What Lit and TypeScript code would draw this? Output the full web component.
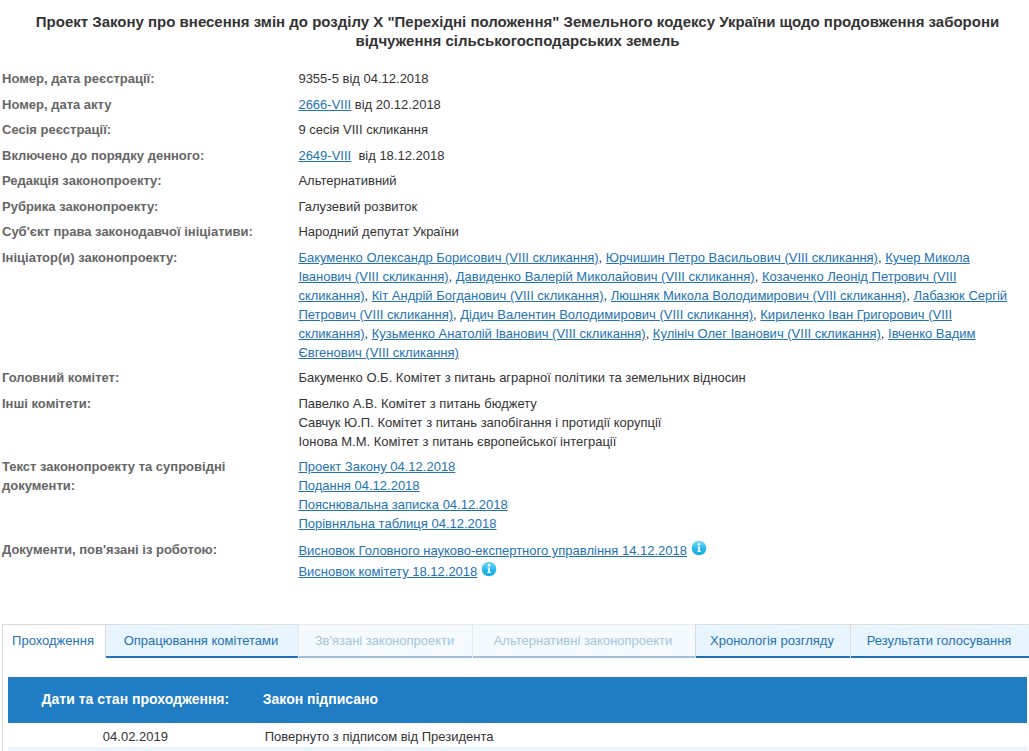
import { LitElement, html, css, nothing } from "lit";
import { customElement } from "lit/decorators.js";

const initiators = [
  "Бакуменко Олександр Борисович",
  "Юрчишин Петро Васильович",
  "Кучер Микола Іванович",
  "Давиденко Валерій Миколайович",
  "Козаченко Леонід Петрович",
  "Кіт Андрій Богданович",
  "Люшняк Микола Володимирович",
  "Лабазюк Сергій Петрович",
  "Дідич Валентин Володимирович",
  "Кириленко Іван Григорович",
  "Кузьменко Анатолій Іванович",
  "Кулініч Олег Іванович",
  "Івченко Вадим Євгенович",
];

const committees = [
  "Павелко А.В. Комітет з питань бюджету",
  "Савчук Ю.П. Комітет з питань запобігання і протидії корупції",
  "Іонова М.М. Комітет з питань європейської інтеграції",
];

const texts = [
  "Проект Закону 04.12.2018",
  "Подання 04.12.2018",
  "Пояснювальна записка 04.12.2018",
  "Порівняльна таблиця 04.12.2018",
];

const related = [
  "Висновок Головного науково-експертного управління 14.12.2018",
  "Висновок комітету 18.12.2018",
];

const tabs = [
  { label: "Проходження", state: "active" },
  { label: "Опрацювання комітетами", state: "open" },
  { label: "Зв'язані законопроекти", state: "disabled" },
  { label: "Альтернативні законопроекти", state: "disabled" },
  { label: "Хронологія розгляду", state: "open" },
  { label: "Результати голосування", state: "open" },
];

const infoIcon = html`<svg class="info" viewBox="0 0 16 16" role="img" aria-label="Інформація">
  <defs>
    <linearGradient id="info-fill" x1="0" y1="0" x2="0" y2="1">
      <stop offset="0" stop-color="#7ad8f6" />
      <stop offset="0.55" stop-color="#27b9ea" />
      <stop offset="1" stop-color="#14a9e0" />
    </linearGradient>
  </defs>
  <circle cx="8" cy="8" r="7.3" fill="url(#info-fill)" />
  <circle cx="8" cy="4.3" r="1.2" fill="#fff" />
  <path d="M6.4 6.4H9V11H9.8V12H6.4V11H7.2V7.4H6.4Z" fill="#fff" />
</svg>`;

@customElement("app-root")
export class AppRoot extends LitElement {
  static styles = css`
    :host {
      display: block;
      height: 100vh;
      overflow: hidden;
      background: #fff;
      color: #333;
      font: 13px/19px "Liberation Sans", Arial, sans-serif;
    }
    .title {
      margin: 0;
      padding: 12px 8px 19px 14px;
      text-align: center;
      font-size: 15px;
      line-height: 19px;
    }
    a {
      color: #2272b4;
      text-decoration: underline;
    }
    .facts {
      margin: 0;
    }
    .fact {
      display: grid;
      grid-template-columns: 29% 1fr;
      padding-bottom: 6px;
    }
    .fact:nth-child(odd) {
      padding-bottom: 7px;
    }
    dt {
      padding: 0 40px 0 2px;
      font-weight: bold;
      color: #666;
    }
    dd {
      margin: 0;
      padding-right: 8px;
    }
    .doc {
      display: flex;
      gap: 4px;
      line-height: 21px;
    }
    .info {
      flex: none;
      width: 16px;
      height: 16px;
    }
    .tabs {
      display: grid;
      grid-template-columns: 103fr 193fr 174fr 223fr 155fr 179fr;
      margin: 36px 0 0 2px;
    }
    .tab {
      height: 34px;
      padding: 0 2px 2px 0;
      border: 0 solid #dadada;
      border-width: 1px 0 0 1px;
      background: #e8f4fe;
      box-shadow: inset 0 -2px #2272b4;
      font: inherit;
      color: #2272b4;
      white-space: nowrap;
    }
    .active {
      background: #fff;
      box-shadow: none;
    }
    .disabled {
      border-color: #ebebeb;
      background: #f5fafe;
      box-shadow: inset 0 -2px #9fbfdb;
      color: #a3c5df;
    }
    .panel {
      margin-left: 2px;
      padding: 19px 2px 8px 5px;
      border-left: 1px solid #dadada;
    }
    .stages {
      width: 100%;
      border-collapse: collapse;
    }
    .stages th {
      height: 44px;
      padding: 0 0 2px;
      background: #207cc3;
      color: #fff;
      font-size: 14px;
      text-align: left;
    }
    .stages td {
      height: 22px;
      padding: 2px 0 0 2px;
    }
    .stages tbody tr:nth-child(even) {
      background: #e8f4fe;
    }
    .stages .date {
      width: 25%;
      padding-left: 0;
      text-align: center;
    }
  `;

  private fact(label: string, value: unknown) {
    return html`<div class="fact"><dt>${label}</dt><dd>${value}</dd></div>`;
  }

  render() {
    return html`
      <h1 class="title">Проект Закону про внесення змін до розділу X "Перехідні положення" Земельного кодексу України щодо продовження заборони відчуження сільськогосподарських земель</h1>
      <dl class="facts">
        ${this.fact("Номер, дата реєстрації:", "9355-5 від 04.12.2018")}
        ${this.fact("Номер, дата акту", html`<a href="#">2666-VIII</a> від 20.12.2018`)}
        ${this.fact("Сесія реєстрації:", "9 сесія VIII скликання")}
        ${this.fact("Включено до порядку денного:", html`<a href="#">2649-VIII</a>&nbsp; від 18.12.2018`)}
        ${this.fact("Редакція законопроекту:", "Альтернативний")}
        ${this.fact("Рубрика законопроекту:", "Галузевий розвиток")}
        ${this.fact("Суб'єкт права законодавчої ініціативи:", "Народний депутат України")}
        ${this.fact(
          "Ініціатор(и) законопроекту:",
          initiators.map((name, i) => html`${i ? ", " : nothing}<a href="#">${name} (VIII скликання)</a>`)
        )}
        ${this.fact("Головний комітет:", "Бакуменко О.Б. Комітет з питань аграрної політики та земельних відносин")}
        ${this.fact("Інші комітети:", committees.map((name) => html`<div>${name}</div>`))}
        ${this.fact(
          "Текст законопроекту та супровідні документи:",
          texts.map((name) => html`<div><a href="#">${name}</a></div>`)
        )}
        ${this.fact(
          "Документи, пов'язані із роботою:",
          related.map((name) => html`<div class="doc"><a href="#">${name}</a>${infoIcon}</div>`)
        )}
      </dl>
      <div class="tabs" role="tablist">
        ${tabs.map(
          (tab) => html`<button
            class="tab ${tab.state}"
            role="tab"
            aria-selected=${tab.state === "active"}
            ?disabled=${tab.state === "disabled"}
          >${tab.label}</button>`
        )}
      </div>
      <div class="panel" role="tabpanel">
        <table class="stages">
          <thead>
            <tr><th class="date">Дати та стан проходження:</th><th>Закон підписано</th></tr>
          </thead>
          <tbody>
            <tr><td class="date">04.02.2019</td><td>Повернуто з підписом від Президента</td></tr>
            <tr><td class="date"></td><td></td></tr>
          </tbody>
        </table>
      </div>
    `;
  }
}
